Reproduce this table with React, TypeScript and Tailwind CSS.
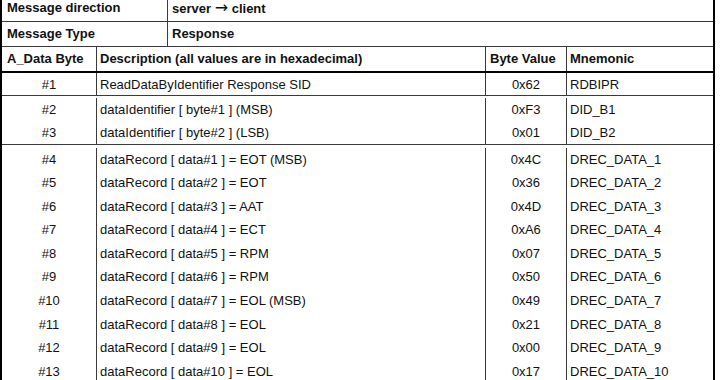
type Row = { no: string; desc: string; value: string; mnemonic: string };

const groups: Row[][] = [
  [{ no: "#1", desc: "ReadDataByIdentifier Response SID", value: "0x62", mnemonic: "RDBIPR" }],
  [
    { no: "#2", desc: "dataIdentifier [ byte#1 ] (MSB)", value: "0xF3", mnemonic: "DID_B1" },
    { no: "#3", desc: "dataIdentifier [ byte#2 ] (LSB)", value: "0x01", mnemonic: "DID_B2" },
  ],
  [
    { no: "#4", desc: "dataRecord [ data#1 ] = EOT (MSB)", value: "0x4C", mnemonic: "DREC_DATA_1" },
    { no: "#5", desc: "dataRecord [ data#2 ] = EOT", value: "0x36", mnemonic: "DREC_DATA_2" },
    { no: "#6", desc: "dataRecord [ data#3 ] = AAT", value: "0x4D", mnemonic: "DREC_DATA_3" },
    { no: "#7", desc: "dataRecord [ data#4 ] = ECT", value: "0xA6", mnemonic: "DREC_DATA_4" },
    { no: "#8", desc: "dataRecord [ data#5 ] = RPM", value: "0x07", mnemonic: "DREC_DATA_5" },
    { no: "#9", desc: "dataRecord [ data#6 ] = RPM", value: "0x50", mnemonic: "DREC_DATA_6" },
    { no: "#10", desc: "dataRecord [ data#7 ] = EOL (MSB)", value: "0x49", mnemonic: "DREC_DATA_7" },
    { no: "#11", desc: "dataRecord [ data#8 ] = EOL", value: "0x21", mnemonic: "DREC_DATA_8" },
    { no: "#12", desc: "dataRecord [ data#9 ] = EOL", value: "0x00", mnemonic: "DREC_DATA_9" },
    { no: "#13", desc: "dataRecord [ data#10 ] = EOL", value: "0x17", mnemonic: "DREC_DATA_10" },
  ],
];

// per-group vertical metrics: top padding + line height of each entry
const groupStyles = [
  { wrap: "h-[23px] border-b border-[#3a3a3a]", line: "leading-[23px]" },
  { wrap: "pt-[2px] border-b border-[#3a3a3a]", line: "leading-[23px]" },
  { wrap: "pt-[2.5px]", line: "leading-[23.6px]" },
];

function Group({ rows, idx }: { rows: Row[]; idx: number }) {
  const s = groupStyles[idx];
  return (
    <div className={`flex ${s.wrap}`}>
      <div className="w-[95px] shrink-0 border-r border-[#3a3a3a] text-center">
        {rows.map((r) => (
          <div key={r.no} className={s.line}>{r.no}</div>
        ))}
      </div>
      <div className="w-[389px] shrink-0 border-r border-[#3a3a3a] pl-[3px]">
        {rows.map((r) => (
          <div key={r.no} className={`${s.line} whitespace-pre`}>{r.desc}</div>
        ))}
      </div>
      <div className="w-[81px] shrink-0 border-r border-[#3a3a3a] text-center">
        {rows.map((r) => (
          <div key={r.no} className={s.line}>{r.value}</div>
        ))}
      </div>
      <div className="flex-1 pl-[3px]">
        {rows.map((r) => (
          <div key={r.no} className={s.line}>{r.mnemonic}</div>
        ))}
      </div>
    </div>
  );
}

export default function App() {
  return (
    <div className="h-[380px] w-[720px] overflow-hidden bg-white font-['Liberation_Sans',Arial,sans-serif] text-[13px] text-[#111]">
      <div className="-mt-[6px] w-[715px] border-x-2 border-black">
        {/* message info */}
        <div className="flex h-[28px] border-b border-[#3a3a3a] font-bold leading-[27px]">
          <div className="w-[166px] shrink-0 border-r border-[#3a3a3a] pl-[5px]">Message direction</div>
          <div className="flex-1 pl-[4px]">
            server <span className="font-['DejaVu_Sans',sans-serif] text-[16px] font-normal">→</span> client
          </div>
        </div>
        <div className="flex h-[25px] border-b border-[#3a3a3a] font-bold leading-[24px]">
          <div className="w-[166px] shrink-0 border-r border-[#3a3a3a] pl-[5px]">Message Type</div>
          <div className="flex-1 pl-[4px]">Response</div>
        </div>

        {/* column header */}
        <div className="flex h-[26px] border-b-2 border-black font-bold leading-[24px]">
          <div className="w-[95px] shrink-0 border-r border-[#3a3a3a] pl-[5px]">A_Data Byte</div>
          <div className="w-[389px] shrink-0 border-r border-[#3a3a3a] pl-[3px]">
            Description (all values are in hexadecimal)
          </div>
          <div className="w-[81px] shrink-0 border-r border-[#3a3a3a] pl-[4px]">Byte Value</div>
          <div className="flex-1 pl-[3px]">Mnemonic</div>
        </div>

        {groups.map((rows, i) => (
          <Group key={i} rows={rows} idx={i} />
        ))}
      </div>
    </div>
  );
}
